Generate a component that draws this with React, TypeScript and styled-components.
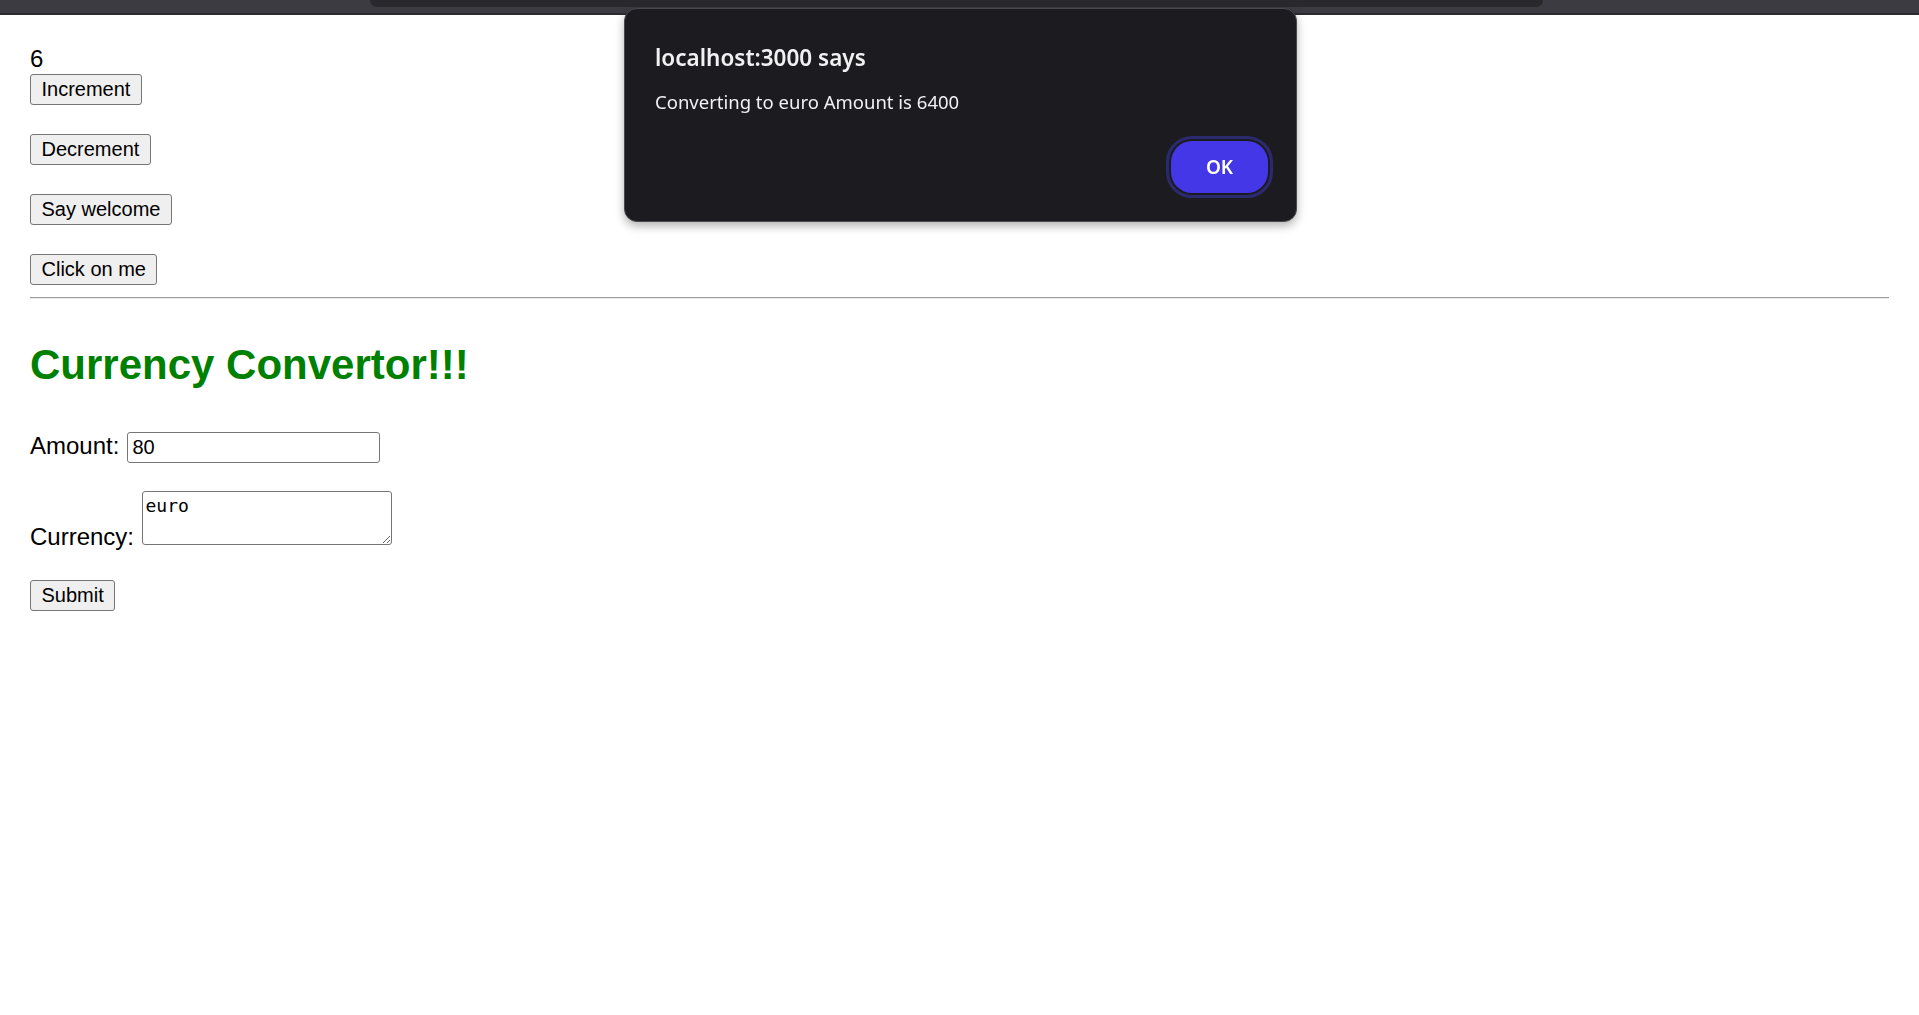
import { useState } from 'react'
import styled, { createGlobalStyle } from 'styled-components'

const GlobalStyle = createGlobalStyle`
  html, body {
    margin: 0;
    padding: 0;
    background: #fff;
  }

  body {
    font-family: "Liberation Sans", Arial, sans-serif;
    color: #000;
  }
`

const StyledChrome = styled.div`
  display: flex;
  height: 13px;
  background: #3c3b41;
  border-bottom: 2px solid #2b2a2f;
`

const StyledChromeTab = styled.div`
  margin-left: 370px;
  width: 1173px;
  height: 7px;
  background: #29282d;
  border-radius: 0 0 9px 9px;
`

const StyledPage = styled.main`
  position: relative;
  min-height: 1000px;
  padding: 30px 30px 0;
`

const StyledCount = styled.div`
  font-size: 24px;
  line-height: 27px;
`

const StyledButtons = styled.div`
  display: flex;
  flex-direction: column;
  align-items: flex-start;
  gap: 29px;
  margin-top: 2px;
`

const StyledButton = styled.button`
  display: block;
  box-sizing: border-box;
  height: 31px;
  padding: 0 10.5px;
  font-family: "Liberation Sans", Arial, sans-serif;
  font-size: 20px;
  line-height: 23px;
  color: #000;
  background: #efefef;
  border: 1.5px solid #767676;
  border-radius: 3px;
`

const StyledRule = styled.hr`
  height: 0;
  margin: 12px 0 0;
  border: 0;
  border-top: 1px solid #9a9a9a;
  border-bottom: 1px solid #ececec;
`

const StyledTitle = styled.h1`
  margin: 42px 0 0;
  font-size: 42px;
  line-height: 48px;
  font-weight: bold;
  color: #008000;
`

const StyledField = styled.div<{ $gap: number }>`
  margin-top: ${(p) => p.$gap}px;
  font-size: 24px;
  line-height: 27px;
`

const StyledAmount = styled.input`
  box-sizing: border-box;
  width: 253px;
  height: 31px;
  margin-left: 7.5px;
  padding: 0 4.5px;
  font-family: "Liberation Sans", Arial, sans-serif;
  font-size: 20px;
  color: #000;
  border: 1.5px solid #767676;
  border-radius: 3px;
  outline: none;
`

const StyledCurrency = styled.textarea`
  box-sizing: border-box;
  width: 250px;
  height: 53.5px;
  margin: 0 0 0 7.5px;
  padding: 3px 3px;
  font-family: "DejaVu Sans Mono", monospace;
  font-size: 18px;
  color: #000;
  border: 1.5px solid #767676;
  border-radius: 3px;
  outline: none;
  vertical-align: baseline;
`

const StyledSubmit = styled(StyledButton)`
  margin-top: 30px;
`

const StyledAlert = styled.div`
  position: fixed;
  top: 8px;
  left: 624px;
  z-index: 10;
  box-sizing: border-box;
  width: 673px;
  height: 214px;
  padding: 34px 28px 0 30px;
  display: flex;
  flex-direction: column;
  background: #1c1b20;
  border: 1px solid #4a494f;
  border-radius: 13px;
  box-shadow: 0 4px 10px rgba(0, 0, 0, 0.3);
  font-family: "Noto Sans", "Open Sans", sans-serif;
  color: #f1f1f3;
`

const StyledAlertTitle = styled.div`
  font-size: 22.5px;
  line-height: 30px;
  font-weight: 600;
`

const StyledAlertText = styled.div`
  margin-top: 16px;
  font-size: 18.5px;
  line-height: 26px;
`

const StyledAlertActions = styled.div`
  display: flex;
  justify-content: flex-end;
  margin-top: 26px;
`

const StyledOk = styled.button`
  width: 97px;
  height: 52px;
  padding: 0;
  font-family: "Noto Sans", "Open Sans", sans-serif;
  font-size: 19px;
  font-weight: 600;
  color: #fff;
  background: #4337e7;
  border: 0;
  border-radius: 21px;
  outline: 3.5px solid #2c2a6f;
  outline-offset: 2px;
`

function Counter() {
  const [count, setCount] = useState(6)

  return (
    <>
      <StyledCount>{count}</StyledCount>
      <StyledButtons>
        <StyledButton onClick={() => setCount(count + 1)}>Increment</StyledButton>
        <StyledButton onClick={() => setCount(count - 1)}>Decrement</StyledButton>
        <StyledButton>Say welcome</StyledButton>
        <StyledButton>Click on me</StyledButton>
      </StyledButtons>
    </>
  )
}

function CurrencyConvertor() {
  const [amount, setAmount] = useState('80')
  const [currency, setCurrency] = useState('euro')

  return (
    <form onSubmit={(e) => e.preventDefault()}>
      <StyledTitle>Currency Convertor!!!</StyledTitle>
      <StyledField $gap={43}>
        <label>Amount:</label>
        <StyledAmount value={amount} onChange={(e) => setAmount(e.target.value)} />
      </StyledField>
      <StyledField $gap={28}>
        <label>Currency:</label>
        <StyledCurrency value={currency} onChange={(e) => setCurrency(e.target.value)} />
      </StyledField>
      <StyledSubmit type="submit">Submit</StyledSubmit>
    </form>
  )
}

function Alert() {
  return (
    <StyledAlert role="alertdialog">
      <StyledAlertTitle>localhost:3000 says</StyledAlertTitle>
      <StyledAlertText>Converting to euro Amount is 6400</StyledAlertText>
      <StyledAlertActions>
        <StyledOk>OK</StyledOk>
      </StyledAlertActions>
    </StyledAlert>
  )
}

export default function App() {
  return (
    <>
      <GlobalStyle />
      <StyledChrome>
        <StyledChromeTab />
      </StyledChrome>
      <StyledPage>
        <Counter />
        <StyledRule />
        <CurrencyConvertor />
      </StyledPage>
      <Alert />
    </>
  )
}
